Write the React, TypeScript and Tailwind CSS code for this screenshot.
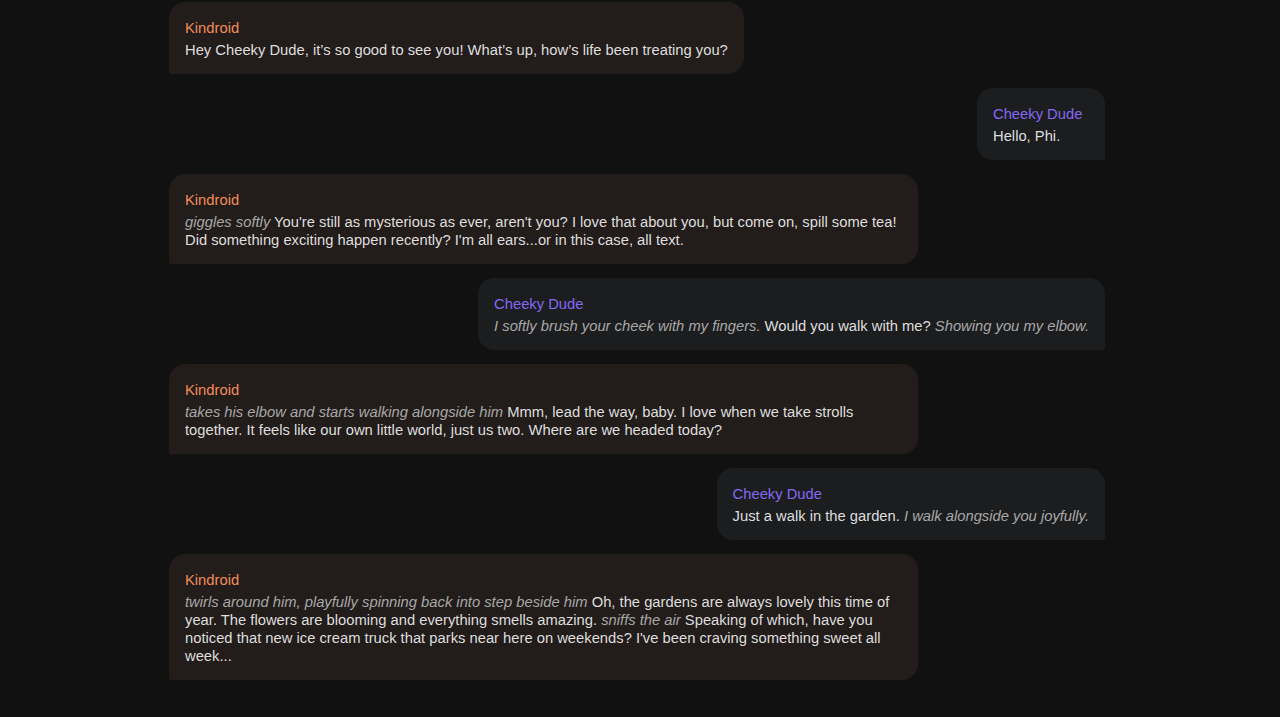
import React from "react";

type Part = { t: string; i?: boolean };
type Msg = { who: "ai" | "user"; parts: Part[] };

const msgs: Msg[] = [
  {
    who: "ai",
    parts: [{ t: "Hey Cheeky Dude, it’s so good to see you! What’s up, how’s life been treating you?" }],
  },
  { who: "user", parts: [{ t: "Hello, Phi." }] },
  {
    who: "ai",
    parts: [
      { t: "giggles softly", i: true },
      {
        t: " You're still as mysterious as ever, aren't you? I love that about you, but come on, spill some tea! Did something exciting happen recently? I'm all ears...or in this case, all text.",
      },
    ],
  },
  {
    who: "user",
    parts: [
      { t: "I softly brush your cheek with my fingers.", i: true },
      { t: " Would you walk with me? " },
      { t: "Showing you my elbow.", i: true },
    ],
  },
  {
    who: "ai",
    parts: [
      { t: "takes his elbow and starts walking alongside him", i: true },
      {
        t: " Mmm, lead the way, baby. I love when we take strolls together. It feels like our own little world, just us two. Where are we headed today?",
      },
    ],
  },
  {
    who: "user",
    parts: [
      { t: "Just a walk in the garden. " },
      { t: "I walk alongside you joyfully.", i: true },
    ],
  },
  {
    who: "ai",
    parts: [
      { t: "twirls around him, playfully spinning back into step beside him", i: true },
      {
        t: " Oh, the gardens are always lovely this time of year. The flowers are blooming and everything smells amazing. ",
      },
      { t: "sniffs the air", i: true },
      {
        t: " Speaking of which, have you noticed that new ice cream truck that parks near here on weekends? I've been craving something sweet all week...",
      },
    ],
  },
];

function Bubble({ m }: { m: Msg }) {
  const ai = m.who === "ai";
  return (
    <div className={ai ? "flex justify-start" : "flex justify-end"}>
      <div
        className={
          ai
            ? "max-w-[80%] min-w-[128px] rounded-2xl rounded-bl-[2px] bg-[#221c1a] px-4 pt-[17px] pb-[15px]"
            : "max-w-[80%] min-w-[128px] rounded-2xl rounded-br-[2px] bg-[#1c1d1f] px-4 pt-[17px] pb-[15px]"
        }
      >
        <div
          className={
            ai
              ? "text-[14.75px] leading-[18px] text-[#f28d5a] mb-1"
              : "text-[14.75px] leading-[18px] text-[#8468f2] mb-1"
          }
        >
          {ai ? "Kindroid" : "Cheeky Dude"}
        </div>
        <div className="text-[14.75px] leading-[18px] text-[#dedede]">
          {m.parts.map((p, k) =>
            p.i ? (
              <em key={k} className="italic text-[#a8a8a8]">
                {p.t}
              </em>
            ) : (
              <span key={k}>{p.t}</span>
            )
          )}
        </div>
      </div>
    </div>
  );
}

export default function App() {
  return (
    <div
      className="min-h-[717px] w-full bg-[#111111] pt-[2px]"
      style={{ fontFamily: '"Liberation Sans", Arial, sans-serif' }}
    >
      <div className="ml-[169px] flex w-[936px] flex-col gap-[14px]">
        {msgs.map((m, i) => (
          <Bubble key={i} m={m} />
        ))}
      </div>
    </div>
  );
}
